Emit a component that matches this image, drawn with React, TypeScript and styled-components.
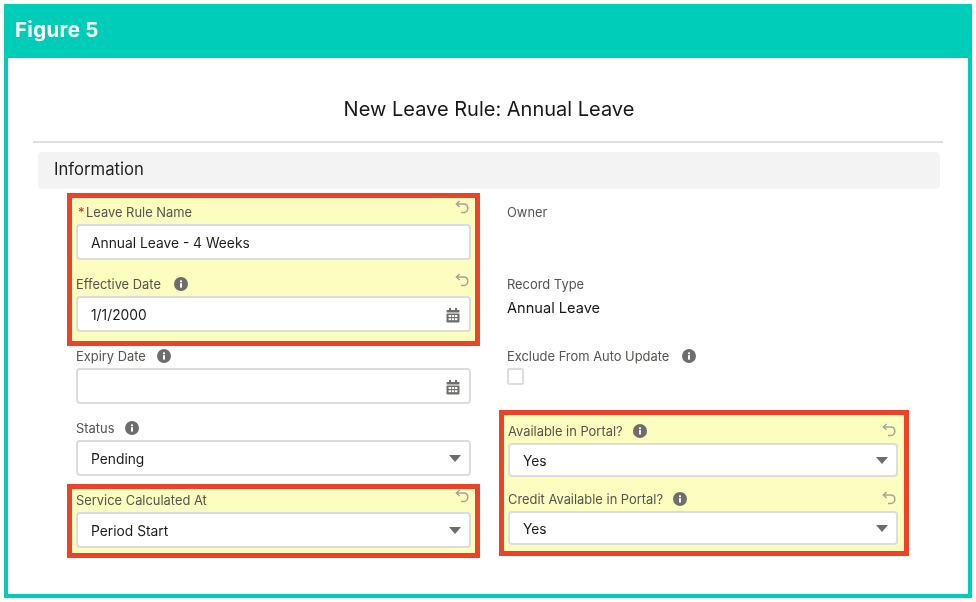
import React from "react";
import styled, {createGlobalStyle} from "styled-components";

const GlobalStyle = createGlobalStyle`
  * {
    box-sizing: border-box;
  }

  body {
    margin: 0;
    background: #fff;
    font-family: Inter, "Liberation Sans", sans-serif;
  }
`;

const InfoSvg = styled.svg`
  width: 14px;
  height: 14px;
  margin-left: 13px;
  flex-shrink: 0;
`;

const InfoIcon = () => (
    <InfoSvg viewBox="0 0 14 14">
        <circle cx="7" cy="7" r="7" fill="#6f6d6b"/>
        <rect x="6" y="6.2" width="2" height="4.4" fill="#fff"/>
        <rect x="6" y="3.4" width="2" height="1.8" fill="#fff"/>
    </InfoSvg>
);

const UndoIcon = () => (
    <UndoSvg viewBox="0 0 14 14" fill="none" stroke="#a3a49a" strokeWidth="1.5">
        <path d="M4.6 1 L1.4 4 L4.6 7"/>
        <path d="M1.6 4 H8.4 C11 4 12.8 5.8 12.8 8.2 C12.8 10.6 11 12.6 8.4 12.6 H6"/>
    </UndoSvg>
);

const CalendarIcon = () => (
    <CalendarSvg viewBox="0 0 14 15">
        <rect x="3" y="0" width="2" height="3" fill="#706e6b"/>
        <rect x="9" y="0" width="2" height="3" fill="#706e6b"/>
        <rect x="0.5" y="2" width="13" height="2.6" rx="0.8" fill="#706e6b"/>
        <rect x="0.5" y="5.4" width="13" height="9" rx="1" fill="#706e6b"/>
        <rect x="2.6" y="7" width="2.4" height="2" fill="#fff"/>
        <rect x="5.8" y="7" width="2.4" height="2" fill="#fff"/>
        <rect x="9" y="7" width="2.4" height="2" fill="#fff"/>
        <rect x="2.6" y="10.2" width="2.4" height="2" fill="#fff"/>
        <rect x="5.8" y="10.2" width="2.4" height="2" fill="#fff"/>
        <rect x="9" y="10.2" width="2.4" height="2" fill="#fff"/>
    </CalendarSvg>
);

type FieldProps = {
    label: string;
    value?: string;
    required?: boolean;
    info?: boolean;
    undo?: number;
    kind?: "calendar" | "select";
    short?: boolean;
};

const Field = ({label, value, required, info, undo, kind, short}: FieldProps) => (
    <FieldWrap>
        <LabelRow>
            {required && <Required>*</Required>}
            <Label>{label}</Label>
            {info && <InfoIcon/>}
            {undo !== undefined && <UndoSlot $shift={undo}><UndoIcon/></UndoSlot>}
        </LabelRow>
        <Control $short={short}>
            <ControlText>{value}</ControlText>
            {kind === "calendar" && <CalendarIcon/>}
            {kind === "select" && <Caret/>}
        </Control>
    </FieldWrap>
);

export default function App() {
    return (
        <>
            <GlobalStyle/>
            <Frame>
                <Header>Figure 5</Header>
                <Title>New Leave Rule: Annual Leave</Title>
                <Divider/>
                <SectionBar>Information</SectionBar>
                <FormGrid>
                    <Column>
                        <Highlight>
                            <FieldStack>
                                <Field label="Leave Rule Name" value="Annual Leave - 4 Weeks" required undo={-5}/>
                                <Field label="Effective Date" value="1/1/2000" info undo={-4} kind="calendar"/>
                            </FieldStack>
                        </Highlight>
                        <PlainFields>
                            <Field label="Expiry Date" info kind="calendar"/>
                            <Field label="Status" value="Pending" info kind="select"/>
                        </PlainFields>
                        <ServiceHighlight>
                            <Field label="Service Calculated At" value="Period Start" undo={-4} kind="select"/>
                        </ServiceHighlight>
                    </Column>
                    <Column>
                        <ReadOnly $height={72}>
                            <Label>Owner</Label>
                        </ReadOnly>
                        <ReadOnly $height={72}>
                            <Label>Record Type</Label>
                            <ReadValue>Annual Leave</ReadValue>
                        </ReadOnly>
                        <ReadOnly $height={64}>
                            <LabelRow>
                                <Label>Exclude From Auto Update</Label>
                                <InfoIcon/>
                            </LabelRow>
                            <Checkbox/>
                        </ReadOnly>
                        <PortalHighlight>
                            <PortalStack>
                                <Field label="Available in Portal?" value="Yes" info undo={-1} kind="select" short/>
                                <Field label="Credit Available in Portal?" value="Yes" info undo={-1} kind="select" short/>
                            </PortalStack>
                        </PortalHighlight>
                    </Column>
                </FormGrid>
            </Frame>
        </>
    );
}

const Frame = styled.div`
  width: 968px;
  height: 594px;
  margin: 4px;
  border: 4px solid #00cdb9;
  background: #fff;
  overflow: hidden;
  filter: blur(0.3px);
`;

const Header = styled.div`
  height: 50px;
  padding: 0 0 8px 7px;
  display: flex;
  align-items: center;
  background: #00cdb9;
  color: #fff;
  font-size: 20.5px;
  font-weight: 700;
  letter-spacing: 0.3px;
`;

const Title = styled.h1`
  margin: 0;
  padding: 38px 0 19px 2px;
  text-align: center;
  font-size: 20px;
  font-weight: 400;
  line-height: 26px;
  color: #181818;
`;

const Divider = styled.div`
  height: 2px;
  margin: 0 25px;
  background: #dddddd;
`;

const SectionBar = styled.div`
  height: 37px;
  margin: 9px 28px 0 30px;
  padding: 0 0 3px 16px;
  display: flex;
  align-items: center;
  border-radius: 4px;
  background: #f3f3f3;
  font-size: 16.7px;
  color: #1f1f1f;
`;

const FormGrid = styled.div`
  display: grid;
  grid-template-columns: 413px 410px;
  column-gap: 19px;
  margin: 4px 0 0 59px;
`;

const Column = styled.div`
  display: flex;
  flex-direction: column;
`;

const Highlight = styled.div`
  border: 5px solid #ef4126;
  background: #fbfebf;
  padding: 4px 4px 9px;
`;

const ServiceHighlight = styled(Highlight)`
  margin-top: 8px;
  padding: 1px 4px 5px;
`;

const PortalHighlight = styled(Highlight)`
  padding: 6px 6px 6px 4px;
`;

const FieldStack = styled.div`
  display: flex;
  flex-direction: column;
  gap: 14px;
`;

const PortalStack = styled(FieldStack)`
  gap: 12px;

  ${InfoSvg} {
    margin-left: 10px;
  }
`;

const PlainFields = styled(FieldStack)`
  padding: 0 9px;

  ${InfoSvg} {
    margin-left: 11px;
  }
`;

const FieldWrap = styled.div`
  display: flex;
  flex-direction: column;
`;

const LabelRow = styled.div`
  height: 20px;
  display: flex;
  align-items: center;
`;

const Label = styled.span`
  display: block;
  height: 20px;
  font-size: 12.9px;
  line-height: 22px;
  color: #555450;
`;

const Required = styled.span`
  width: 10px;
  padding-left: 2px;
  font-size: 13px;
  line-height: 20px;
  color: #d6242a;
`;

const UndoSlot = styled.span<{ $shift: number }>`
  display: flex;
  margin-left: auto;
  margin-right: 2px;
  margin-top: ${p => p.$shift * 2}px;
`;

const UndoSvg = styled.svg`
  width: 14px;
  height: 14px;
`;

const Control = styled.div<{ $short?: boolean }>`
  height: ${p => (p.$short ? 34 : 36)}px;
  margin-top: 2px;
  padding: 0 10px 0 13px;
  display: flex;
  align-items: center;
  justify-content: space-between;
  border: 2px solid #dcdcdc;
  border-radius: 4px;
  background: #fff;
  font-size: 13.8px;
  color: #1c1c1c;
`;

const ControlText = styled.span`
  padding-top: 2px;
`;

const CalendarSvg = styled.svg`
  width: 14px;
  height: 15px;
  margin: 3px -1px 0 0;
`;

const Caret = styled.span`
  width: 0;
  height: 0;
  margin-right: -2px;
  border-left: 6px solid transparent;
  border-right: 6px solid transparent;
  border-top: 7px solid #6f6d6b;
`;

const ReadOnly = styled.div<{ $height: number }>`
  height: ${p => p.$height}px;
  padding-left: 8px;

  &:first-child {
    height: ${p => p.$height + 9}px;
    padding-top: 9px;
  }
`;

const ReadValue = styled.div`
  margin-top: 3px;
  font-size: 14.6px;
  line-height: 22px;
  color: #181818;
`;

const Checkbox = styled.div`
  width: 17px;
  height: 17px;
  margin-top: 2px;
  border: 2px solid #dcdcdc;
  border-radius: 2px;
  background: #fff;
`;
